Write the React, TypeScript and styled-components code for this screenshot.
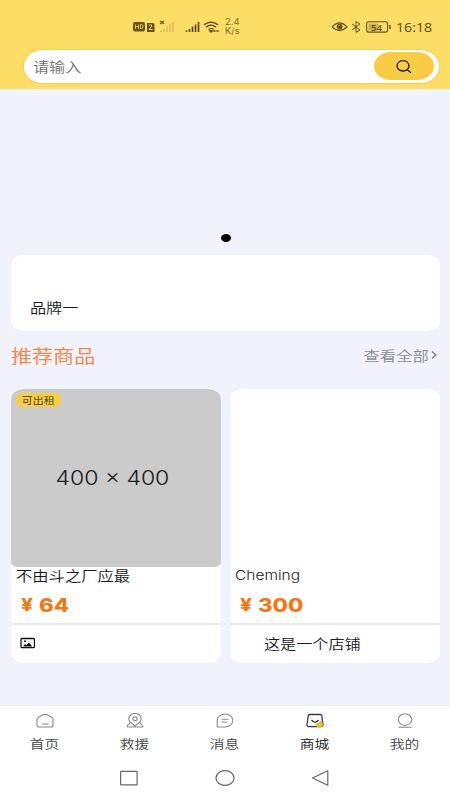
import React from "react";
import styled, { createGlobalStyle } from "styled-components";

const GlobalStyle = createGlobalStyle`
  * { box-sizing: border-box; }
  body { margin: 0; background: #f0f3fb; }
  svg { display: block; flex: none; }
`;

const Screen = styled.div`
  width: 450px;
  height: 800px;
  display: flex;
  flex-direction: column;
  overflow: hidden;
  background: #f0f3fb;
  color: #222;
  font-family: "Noto Sans CJK SC", sans-serif;
`;

const families = {
  cjk: '"Noto Sans CJK SC", sans-serif',
  latin: '"Open Sans", "Noto Sans", sans-serif',
  price: 'Inter, sans-serif',
};

/* The interface is set in slightly extended letterforms. */
const Label = styled.span<{
  $size: number;
  $stretch?: number;
  $color?: string;
  $weight?: number;
  $origin?: string;
  $family?: keyof typeof families;
}>`
  display: inline-block;
  white-space: nowrap;
  font-size: ${(p) => p.$size}px;
  line-height: 20px;
  font-weight: ${(p) => p.$weight ?? 350};
  color: ${(p) => p.$color ?? "#1a1a1a"};
  font-family: ${(p) => families[p.$family ?? "cjk"]};
  transform: scaleX(${(p) => p.$stretch ?? 1.15});
  transform-origin: ${(p) => p.$origin ?? "left"} center;
`;

const Header = styled.header`
  height: 89px;
  flex: none;
  background: #fcdd65;
`;

const StatusBar = styled.div`
  height: 50px;
  padding: 4px 17px 0 133px;
  display: flex;
  align-items: center;
  justify-content: space-between;
`;

const Rate = styled.div`
  width: 20px;
  margin-left: 5px;
  white-space: pre-line;
  font: 8.5px/9px Inter, sans-serif;
  color: #7c6c32;
  transform: scaleX(1.1);
  transform-origin: left;
`;

const StatusGroup = styled.div`
  display: flex;
  align-items: center;
`;

const Clock = styled.div`
  width: 37px;
  margin-left: 4px;
  font: 13px/18px "Open Sans", sans-serif;
  color: #5a4c1c;
  transform: scaleX(1.09);
  transform-origin: left;
`;

const SearchBox = styled.div`
  width: 415px;
  height: 33px;
  margin-left: 24px;
  padding: 0 5px 1px 9px;
  display: flex;
  align-items: center;
  justify-content: space-between;
  border-radius: 19px / 17px;
  background: #fff;
  box-shadow: 0 0 1px 1px #eed062;
`;

const SearchButton = styled.button`
  width: 60px;
  height: 28px;
  padding: 0;
  display: flex;
  align-items: center;
  justify-content: center;
  border: 0;
  border-radius: 17px / 14px;
  background: #f8cd45;
`;

const Banner = styled.section`
  height: 166px;
  flex: none;
  display: flex;
  align-items: flex-end;
  justify-content: center;
  padding: 0 0 13px 1px;
`;

const Dot = styled.i`
  width: 10px;
  height: 8px;
  border-radius: 50%;
  background: #000;
`;

const BrandCard = styled.section`
  height: 76px;
  flex: none;
  margin: 0 10px 0 11px;
  padding: 39px 19px 0;
  border-radius: 12px / 10px;
  background: #fff;
`;

const SectionHead = styled.div`
  height: 58px;
  flex: none;
  padding: 14px 12px 0 11px;
  display: flex;
  align-items: flex-start;
  justify-content: space-between;
`;

const More = styled.div`
  display: flex;
  align-items: center;
  gap: 2px;
`;

const Products = styled.main`
  flex: 1;
  display: grid;
  grid-template-columns: 210px 210px;
  column-gap: 9px;
  align-items: start;
  padding-left: 11px;
`;

const Card = styled.article`
  height: 274px;
  border-radius: 12px / 10px;
  overflow: hidden;
  background: #fff;
`;

const Photo = styled.div<{ $filled?: boolean }>`
  position: relative;
  height: 178px;
  display: flex;
  align-items: center;
  justify-content: center;
  padding-right: 8px;
  border-radius: 12px 12px 6px 6px / 10px 10px 5px 5px;
  background: ${(p) => (p.$filled ? "#cbcbcb" : "#fff")};
`;

const Tag = styled.span`
  position: absolute;
  left: 5px;
  top: 4px;
  width: 45px;
  height: 14px;
  display: flex;
  align-items: center;
  justify-content: center;
  border-radius: 6px;
  background: #f8cd45;
`;

const Details = styled.div`
  height: 58px;
  padding-left: 5px;
  display: flex;
  flex-direction: column;
  align-items: flex-start;
  border-bottom: 2px solid #ebebeb;
`;

const Title = styled.div`
  display: flex;
  height: 20px;
  margin-top: -2px;
`;

const Price = styled.div`
  display: flex;
  align-items: center;
  gap: 8px;
  margin: 10px 0 0 5px;
`;

const Shop = styled.div<{ $inset: number }>`
  height: 36px;
  padding-left: ${(p) => p.$inset}px;
  display: flex;
  align-items: center;
`;

const TabBar = styled.nav`
  height: 50px;
  flex: none;
  display: grid;
  grid-template-columns: repeat(5, 1fr);
  padding: 7px 0 0;
  background: #fff;
  box-shadow: 0 -1px 0 #eceef4;
`;

const Tab = styled.div`
  display: flex;
  flex-direction: column;
  align-items: center;
  gap: 5px;
`;

const SystemBar = styled.div`
  height: 44px;
  flex: none;
  display: flex;
  justify-content: center;
  align-items: center;
  gap: 76px;
  background: #fff;
`;

const SimIcons = () => (
  <svg width="87" height="14" viewBox="0 0 87 14" fill="none">
    <rect x="0" y="2" width="12" height="9.5" rx="2" fill="#62531f" />
    <path d="M2.5 4.5V9M5.5 4.5V9M2.5 6.7h3M7.5 4.5v4h1q1.5 0 1.5-2t-1.5-2z" stroke="#fcdd65" strokeWidth=".8" />
    <path d="M14 3h6l1.5 1v8H14z" fill="#62531f" />
    <path d="M16 5h2.5v1.5L16 9.5h3.5" stroke="#fcdd65" />
    <path d="m27 1 4 3m0-3-4 3" stroke="#62531f" strokeWidth="1.2" />
    <path d="M28 12V10m3 2V9m3 3V6m3 6V4m3 8V2" stroke="#d5b853" strokeWidth="1.3" />
    <path d="M53.5 12v-1.5m3 1.5V9m3 3V6.5m3 5.5V4.5m3 7.5V2" stroke="#4f4216" strokeWidth="1.6" />
    <path d="M71 4.8Q78-.7 85 4.8M73 7.3Q78 3 83 7.3M75.5 9.5Q78 7.5 80.5 9.5" stroke="#4f4216" strokeWidth="1.2" />
    <path d="m77 11 1 1 1-1zM80.5 11h2m1 0h2" stroke="#4f4216" strokeWidth="1.4" />
  </svg>
);

const DeviceIcons = () => (
  <svg width="60" height="14" viewBox="0 0 60 14" fill="none" stroke="#62531f">
    <path d="M0 7Q7.5-1.3 15 7 7.5 14 0 7Z" strokeWidth="1.2" />
    <circle cx="7.6" cy="6.6" r="2.5" fill="#62531f" />
    <path d="m6.6 5 1 1" stroke="#fcdd65" />
    <path d="m20 4 8 6-4 2.5V1.5L28 4l-8 6" strokeWidth="1" />
    <rect x="34.6" y="1.8" width="21" height="10.3" rx="2" strokeWidth="1.1" />
    <path d="M36.5 3.5h10v7h-10z" fill="#cdb04e" stroke="none" />
    <path d="M58 5v4" strokeWidth="1.4" />
    <text x="39" y="10.5" fontSize="9.5" fontWeight="600" fontFamily="Open Sans, sans-serif" fill="#62531f" stroke="none">54</text>
  </svg>
);

const SearchIcon = () => (
  <svg width="17" height="15" viewBox="0 0 17 15" fill="none" stroke="#191919" strokeWidth="1.3">
    <ellipse cx="7" cy="6.8" rx="6" ry="5.2" />
    <path d="m11 10.5 4 3.2" />
  </svg>
);

const PictureIcon = () => (
  <svg width="15" height="12" viewBox="0 0 15 12" fill="none" stroke="#111">
    <rect x="1" y="1.5" width="13.5" height="9.2" rx="1" strokeWidth="1.3" />
    <path d="m3 9.5 2-2.4 1.3 1.2L9 5.5l3.3 4z" fill="#111" stroke="none" />
    <circle cx="5" cy="4.3" r="1" fill="#111" stroke="none" />
  </svg>
);

const tabIcons = {
  home: (
    <path d="M1 6.3Q1 5 2.5 4.2l5-2.6q1.5-.8 3 0l5 2.6q1.5.9 1.5 2.1V12q0 2-2 2H3q-2 0-2-2zM6 11h6.5" />
  ),
  rescue: (
    <>
      <path d="M9 13 4.6 9.3a6.2 5.2 0 1 1 8.8 0zM3.8 9.5 1.3 13q-.5 1 1 1h13.4q1.5 0 1-1l-2.5-3.5" />
      <ellipse cx="9" cy="5.8" rx="2.2" ry="1.9" />
    </>
  ),
  message: <path d="M1.2 13.5v-6A7.8 6.5 0 1 1 9 14H1.7q-.5 0-.5-.5M5.5 6.2h7M5.5 9h5" />,
  profile: (
    <>
      <ellipse cx="9" cy="6.6" rx="6.8" ry="5.8" />
      <path d="M2.6 14.2h12.9" />
    </>
  ),
};

const ShopIcon = () => (
  <>
    <path
      d="M3.5 1.5h11q1 0 1.2 1l1.3 9q.2 2.2-2 2.2H3q-2.2 0-2-2.2l1.3-9q.2-1 1.2-1ZM5.500 7Q9 11.200 12.500 7"
      stroke="#30365f"
      strokeWidth="1.3"
    />
    <path d="m9 11 4-1.5L15.800 7l1.200 5q0 2-1.800 2H11z" fill="#f4b927" stroke="none" />
  </>
);

const tabs = [
  { name: "首页", icon: tabIcons.home },
  { name: "救援", icon: tabIcons.rescue },
  { name: "消息", icon: tabIcons.message },
  { name: "商城", icon: <ShopIcon />, active: true },
  { name: "我的", icon: tabIcons.profile },
];

const PriceTag = ({ amount }: { amount: string }) => (
  <Price>
    <Label $size={18} $weight={800} $color="#f07818" $family="price">¥</Label>
    <Label $size={18.5} $weight={800} $color="#f07818" $family="price" $stretch={1.2}>{amount}</Label>
  </Price>
);

export default function App() {
  return (
    <>
      <GlobalStyle />
      <Screen>
        <Header>
          <StatusBar>
            <StatusGroup>
              <SimIcons />
              <Rate>{"2.4\nK/s"}</Rate>
            </StatusGroup>
            <StatusGroup>
              <DeviceIcons />
              <Clock>16:18</Clock>
            </StatusGroup>
          </StatusBar>
          <SearchBox>
            <Label $size={14} $color="#707070">请输入</Label>
            <SearchButton aria-label="搜索">
              <SearchIcon />
            </SearchButton>
          </SearchBox>
        </Header>

        <Banner>
          <Dot />
        </Banner>

        <BrandCard>
          <Label $size={14}>品牌一</Label>
        </BrandCard>

        <SectionHead>
          <Label $size={18} $stretch={1.17} $color="#f18a50" $weight={400}>推荐商品</Label>
          <More>
            <Label $size={14} $stretch={1.17} $color="#888b90" $origin="right">查看全部</Label>
            <svg width="7" height="10" viewBox="0 0 7 10" fill="none" stroke="#777" strokeWidth="1.2">
              <path d="m1 1.5 4 3.5-4 3.5" />
            </svg>
          </More>
        </SectionHead>

        <Products>
          <Card>
            <Photo $filled>
              <Tag>
                <Label $size={9.5} $origin="center" $color="#40360f">可出租</Label>
              </Tag>
              <Label $size={20} $family="price" $weight={300} $stretch={1.15} $origin="center">400 × 400</Label>
            </Photo>
            <Details>
              <Title>
                <Label $size={14} $stretch={1.165}>不由斗之厂应最</Label>
              </Title>
              <PriceTag amount="64" />
            </Details>
            <Shop $inset={9}>
              <PictureIcon />
            </Shop>
          </Card>
          <Card>
            <Photo />
            <Details>
              <Title>
                <Label $size={13.5} $family="price" $weight={350} $stretch={1.15}>Cheming</Label>
              </Title>
              <PriceTag amount="300" />
            </Details>
            <Shop $inset={34}>
              <Label $size={14}>这是一个店铺</Label>
            </Shop>
          </Card>
        </Products>

        <TabBar>
          {tabs.map((tab) => (
            <Tab key={tab.name}>
              <svg width="18" height="16" viewBox="0 0 18 16" fill="none" stroke="#8b8b8b" strokeWidth="1.1">
                {tab.icon}
              </svg>
              <Label $size={12.5} $stretch={1.18} $origin="center" $color={tab.active ? "#111" : "#444"}>
                {tab.name}
              </Label>
            </Tab>
          ))}
        </TabBar>

        <SystemBar>
          <svg width="20" height="18" viewBox="0 0 20 18" fill="none" stroke="#666" strokeWidth="1.2">
            <rect x="1.6" y="2.3" width="16.5" height="13.6" rx=".5" />
          </svg>
          <svg width="20" height="18" viewBox="0 0 20 18" fill="none" stroke="#666" strokeWidth="1.2">
            <ellipse cx="10" cy="9" rx="9" ry="7.4" />
          </svg>
          <svg width="20" height="18" viewBox="0 0 20 18" fill="none" stroke="#666" strokeWidth="1.2">
            <path d="M16.800 1.700v14.600L1.500 9z" strokeLinejoin="round" />
          </svg>
        </SystemBar>
      </Screen>
    </>
  );
}
